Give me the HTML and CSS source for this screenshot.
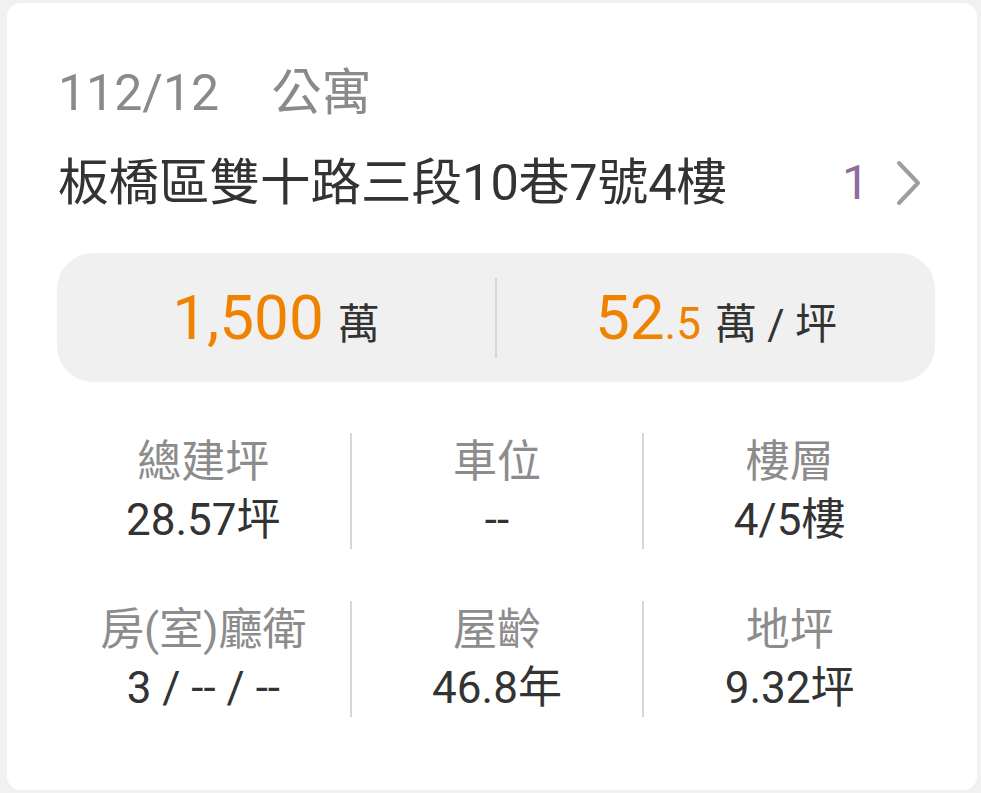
FILE: index.html
```html
<!DOCTYPE html>
<html>
<head>
  <meta charset="UTF-8">
  <meta name="viewport" content="width=device-width, initial-scale=1.0">
  <title>實價登錄</title>
  <link rel="stylesheet" href="styles.css">
</head>
<body>
  <div class="card">
    <div class="meta">
      <span>112/12</span>
      <span class="type">公寓</span>
    </div>

    <div class="address-row">
      <div class="address">板橋區雙十路三段10巷7號4樓</div>
      <div class="more">
        <span class="count">1</span>
        <svg class="chevron" width="28" height="48" viewBox="0 0 28 48">
          <polyline points="4,4 23,24 4,44" fill="none" stroke="#9e9e9e" stroke-width="4" stroke-linecap="round" stroke-linejoin="round"/>
        </svg>
      </div>
    </div>

    <div class="price-box">
      <div class="price">
        <span class="num">1,500</span><span class="unit">萬</span>
      </div>
      <div class="divider"></div>
      <div class="price">
        <span class="num">52</span><span class="num small">.5</span><span class="unit">萬 / 坪</span>
      </div>
    </div>

    <div class="stats">
      <div class="stat">
        <div class="label">總建坪</div>
        <div class="value">28.57坪</div>
      </div>
      <div class="stat">
        <div class="label">車位</div>
        <div class="value">--</div>
      </div>
      <div class="stat">
        <div class="label">樓層</div>
        <div class="value">4/5樓</div>
      </div>
      <div class="stat">
        <div class="label">房(室)廳衛</div>
        <div class="value">3 / -- / --</div>
      </div>
      <div class="stat">
        <div class="label">屋齡</div>
        <div class="value">46.8年</div>
      </div>
      <div class="stat">
        <div class="label">地坪</div>
        <div class="value">9.32坪</div>
      </div>
    </div>
  </div>
</body>
</html>
```

FILE: styles.css
```css
body {
  margin: 0;
  padding: 3px 4px 3px 7px;
  background: #f1f1f1;
  font-family: Roboto, "Noto Sans CJK TC", sans-serif;
  color: #333;
}

.card {
  background: white;
  border-radius: 14px;
  height: 787px;
  box-sizing: border-box;
  padding: 60px 42px 0 50px;
}

.meta {
  font-size: 50px;
  line-height: 60px;
  color: #8a8a8a;
  padding-left: 1px;
}

.meta .type {
  margin-left: 40px;
}

.address-row {
  display: flex;
  justify-content: space-between;
  align-items: center;
  margin-top: 30px;
  padding-left: 1px;
}

.address {
  font-size: 50.5px;
  line-height: 60px;
  color: #333;
}

.more {
  display: flex;
  align-items: center;
  gap: 26px;
  margin-right: 12px;
}

.count {
  font-size: 48px;
  line-height: 60px;
  color: #8d6c9f;
}

.price-box {
  display: flex;
  align-items: center;
  height: 129px;
  margin-top: 40px;
  background: #f0f0f0;
  border-radius: 36px;
}

.price {
  flex: 1;
  text-align: center;
  white-space: nowrap;
}

.price .num {
  font-size: 62px;
  color: #ef8200;
}

.price .num.small {
  font-size: 44px;
}

.price .unit {
  font-size: 42px;
  margin-left: 14px;
  color: #333;
}

.divider {
  width: 2px;
  height: 80px;
  background: #d6d6d6;
}

.stats {
  display: grid;
  grid-template-columns: repeat(3, 1fr);
  row-gap: 52px;
  margin-top: 51px;
}

.stat {
  text-align: center;
}

.stat:nth-child(3n+2),
.stat:nth-child(3n+3) {
  border-left: 2px solid #d6d6d6;
}

.stat .label {
  font-size: 44px;
  line-height: 58px;
  color: #8c8c8c;
}

.stat .value {
  font-size: 44px;
  line-height: 58px;
  color: #333;
}
```
